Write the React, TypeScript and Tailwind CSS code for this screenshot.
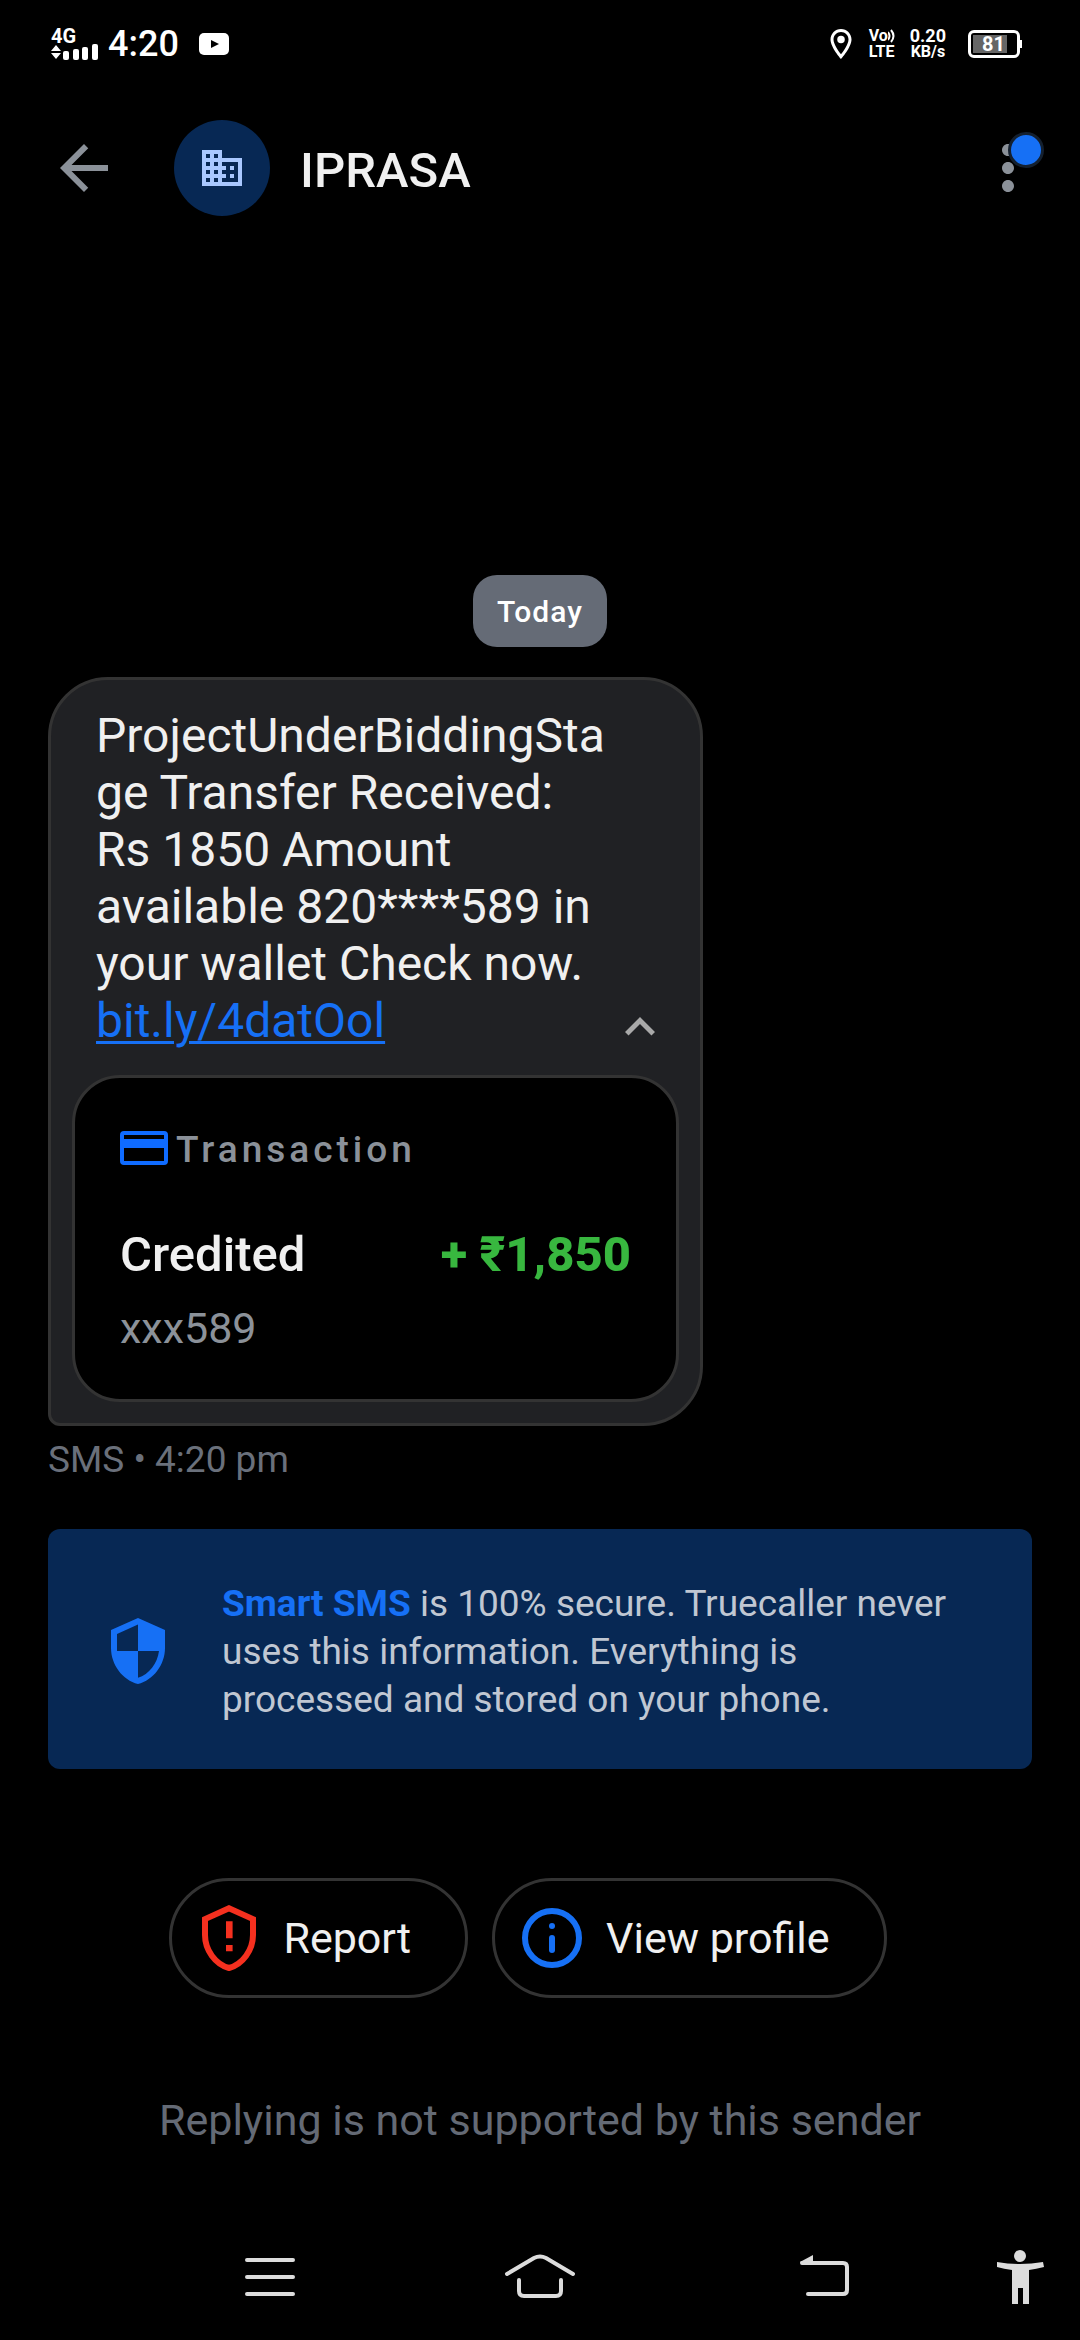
import React from "react";
import {
  MdArrowBack,
  MdBusiness,
  MdExpandLess,
  MdMoreVert,
  MdOutlineLocationOn,
  MdSecurity,
} from "react-icons/md";

interface Transaction {
  type: string;
  amount: string;
  account: string;
}

const transaction: Transaction = {
  type: "Credited",
  amount: "+ ₹1,850",
  account: "xxx589",
};

const StatusBar = () => (
  <div className="flex h-[84px] items-center justify-between pl-[51px] pr-[58px] pt-[3px] text-white">
    <div className="flex items-center">
      <div className="flex w-[48px] flex-col">
        <span className="text-[20px] font-bold leading-[16px]">4G</span>
        <svg className="h-[16px] w-[48px]" viewBox="0 0 48 16" fill="currentColor">
          <path d="M0 7 5 1l5 6zM0 9l5 6 5-6z" />
          <rect x="12" y="7" width="6" height="9" rx="2" />
          <rect x="22" y="5" width="6" height="11" rx="2" />
          <rect x="31" y="3" width="6" height="13" rx="2" />
          <rect x="41" y="0" width="6" height="16" rx="2" />
        </svg>
      </div>
      <span className="ml-[9px] text-[36px] font-medium leading-[42px]">4:20</span>
      <svg className="ml-[20px] h-[22px] w-[30px]" viewBox="0 0 30 22">
        <rect width="30" height="22" rx="5" fill="currentColor" />
        <path d="M12 7v8l8-4z" fill="#000" />
      </svg>
    </div>

    <div className="flex items-center">
      <MdOutlineLocationOn className="h-[36px] w-[36px]" />
      <div className="ml-[10px] flex flex-col text-[16px] font-bold leading-[16px]">
        <span className="flex items-center">
          Vo
          <svg
            className="h-[14px] w-[8px]"
            viewBox="0 0 8 14"
            fill="none"
            stroke="currentColor"
            strokeWidth="2"
          >
            <path d="M0 3q3 4 0 8M3 1q5 6 0 12" />
          </svg>
        </span>
        <span>LTE</span>
      </div>
      <div className="ml-[14px] flex flex-col items-center text-[16px] font-bold leading-[16px]">
        <span className="text-[18px] leading-[16px]">0.20</span>
        <span>KB/s</span>
      </div>
      <div className="ml-[22px] flex items-center">
        <div className="flex h-[28px] w-[52px] items-center rounded-[6px] border-[3px] border-white px-[2px]">
          <div className="flex h-[18px] w-[34px] items-center justify-end bg-[#666666] pr-[2px] text-[20px] font-bold leading-[18px]">
            81
          </div>
        </div>
        <div className="h-[8px] w-[2px] bg-white" />
      </div>
    </div>
  </div>
);

const Header = () => (
  <header className="flex h-[168px] items-center pl-[48px] pr-[36px]">
    <button aria-label="Back" className="text-[#8b9199]">
      <MdArrowBack className="h-[72px] w-[72px]" />
    </button>
    <div className="ml-[54px] flex h-[96px] w-[96px] items-center justify-center rounded-full bg-[#072854] text-[#a9c8ff]">
      <MdBusiness className="h-[48px] w-[48px]" />
    </div>
    <h1 className="ml-[30px] flex-1 pt-[5px] text-[49px] font-medium leading-[56px] text-[#f0f0f0]">
      IPRASA
    </h1>
    <button aria-label="More options" className="relative text-[#8b9199]">
      <MdMoreVert className="h-[72px] w-[72px]" />
      <span className="absolute right-0 top-0 h-[36px] w-[36px] rounded-full border-[3px] border-[#14202f] bg-[#1670f5]" />
    </button>
  </header>
);

const TransactionCard = ({ type, amount, account }: Transaction) => (
  <div className="mx-[21px] mb-[21px] mt-[26px] rounded-[48px] border-[3px] border-[#333333] bg-black px-[45px] pb-[46px] pt-[48px]">
    <div className="flex items-center gap-[8px]">
      <svg className="mb-[4px] h-[34px] w-[48px]" viewBox="0 0 48 34">
        <rect
          x="2"
          y="2"
          width="44"
          height="30"
          rx="2"
          fill="none"
          stroke="#0f6bff"
          strokeWidth="4"
        />
        <path d="M2 8h44v9H2z" fill="#0f6bff" />
      </svg>
      <span className="text-[37px] font-medium leading-[48px] tracking-[4px] text-[#8b9199]">
        Transaction
      </span>
    </div>
    <div className="mt-[53px] flex items-center justify-between text-[49px] leading-[56px]">
      <span className="font-medium text-[#f0f0f0]">{type}</span>
      <span className="font-extrabold text-[#38b73f]">{amount}</span>
    </div>
    <p className="mt-[20px] text-[43px] leading-[50px] text-[#8b9199]">{account}</p>
  </div>
);

const MessageBubble = () => (
  <div className="mt-[30px] w-[655px] rounded-[60px] rounded-bl-[12px] border-[3px] border-[#333333] bg-[#202124]">
    <div className="flex items-end justify-between pl-[45px] pr-[30px] pt-[27px]">
      <p className="text-[48px] leading-[57px] text-[#f0f0f0]">
        ProjectUnderBiddingSta
        <br />
        ge Transfer Received:
        <br />
        Rs 1850 Amount
        <br />
        available 820****589 in
        <br />
        your wallet Check now.
        <br />
        <a
          href="#"
          className="text-[#1670f5] underline decoration-[3px] underline-offset-[4px]"
        >
          bit.ly/4datOol
        </a>
      </p>
      <button aria-label="Collapse" className="-mb-[8px] text-[#a9a9a9]">
        <MdExpandLess className="h-[60px] w-[60px]" />
      </button>
    </div>
    <TransactionCard {...transaction} />
  </div>
);

const SecureBanner = () => (
  <div className="mt-[48px] flex items-center gap-[48px] rounded-[12px] bg-[#072854] pb-[45px] pl-[54px] pr-[36px] pt-[48px]">
    <MdSecurity className="h-[72px] w-[72px] shrink-0 text-[#1670f5]" />
    <p className="pt-[3px] text-[37px] leading-[48px] text-[#c0c7d2]">
      <b className="font-bold text-[#1670f5]">Smart SMS</b> is 100% secure. Truecaller
      never
      <br />
      uses this information. Everything is
      <br />
      processed and stored on your phone.
    </p>
  </div>
);

const Actions = () => (
  <div className="mt-[109px] flex justify-center gap-[24px] pr-[24px] text-[43px] text-[#f0f0f0]">
    <button className="flex h-[120px] items-center gap-[18px] rounded-full border-[3px] border-[#333333] pl-[21px] pr-[54px]">
      <svg className="h-[72px] w-[72px] text-[#f5301f]" viewBox="0 0 24 24">
        <path
          d="M12 2.1 4 5.7V11c0 5 3.4 9.7 8 11 4.6-1.3 8-6 8-11V5.7z"
          fill="none"
          stroke="currentColor"
          strokeWidth="2"
        />
        <path d="M11 6.4h2.2v5.7H11zM11 14.3h2.2v2.1H11z" fill="currentColor" />
      </svg>
      Report
    </button>
    <button className="flex h-[120px] items-center gap-[18px] rounded-full border-[3px] border-[#333333] pl-[21px] pr-[54px]">
      <svg className="h-[72px] w-[72px] text-[#1670f5]" viewBox="0 0 72 72">
        <circle cx="36" cy="36" r="27" fill="none" stroke="currentColor" strokeWidth="6" />
        <circle cx="36" cy="24" r="3" fill="currentColor" />
        <rect x="33" y="33" width="6" height="18" rx="3" fill="currentColor" />
      </svg>
      View profile
    </button>
  </div>
);

const BottomNav = () => (
  <nav className="grid h-[126px] grid-cols-[18fr_18fr_20fr_7fr] items-center pl-[12.5%] text-[#dcdcdc]">
    <button aria-label="Recent apps" className="flex justify-center">
      <svg
        className="h-[60px] w-[56px]"
        viewBox="0 0 56 60"
        stroke="currentColor"
        strokeWidth="4"
        strokeLinecap="round"
      >
        <path d="M5 13h46M5 30h46M5 47h46" />
      </svg>
    </button>
    <button aria-label="Home" className="flex justify-center">
      <svg
        className="h-[60px] w-[72px]"
        viewBox="0 0 72 60"
        fill="none"
        stroke="currentColor"
        strokeWidth="4"
        strokeLinecap="round"
      >
        <path d="M3 27 30 11q6-3 12 0l27 16M15 33v11q0 5 5 5h32q5 0 5-5V33" />
      </svg>
    </button>
    <button aria-label="Back" className="flex justify-center">
      <svg
        className="h-[60px] w-[54px]"
        viewBox="0 0 54 60"
        fill="none"
        stroke="currentColor"
        strokeWidth="4"
        strokeLinecap="round"
      >
        <path d="M4 16h41q4 0 4 4v23q0 4-4 4H10" />
        <path d="M2 15 15 8v8H3z" fill="currentColor" stroke="none" />
      </svg>
    </button>
    <button aria-label="Accessibility" className="flex pl-[18px]">
      <svg className="h-[60px] w-[54px]" viewBox="0 0 54 60" fill="currentColor">
        <circle cx="27" cy="9" r="6" />
        <path d="m4 15q23 4 46 0l1 5q-8 2-15 3v34h-6V41h-5v16h-6V23q-8-1-15-3z" />
      </svg>
    </button>
  </nav>
);

const App = () => (
  <div className="flex min-h-screen flex-col bg-black font-['Roboto',sans-serif]">
    <StatusBar />
    <Header />
    <main className="flex flex-1 flex-col justify-end px-[48px]">
      <div className="flex h-[72px] items-center self-center rounded-[24px] bg-[#656b76] px-[24px] text-[30px] font-medium tracking-[1px] text-white">
        Today
      </div>
      <MessageBubble />
      <p className="mt-[12px] text-[37px] leading-[43px] text-[#6a707b]">SMS • 4:20 pm</p>
      <SecureBanner />
      <Actions />
    </main>
    <p className="pb-[69px] pt-[97px] text-center text-[43px] leading-[50px] text-[#646a75]">
      Replying is not supported by this sender
    </p>
    <BottomNav />
  </div>
);

export default App;
